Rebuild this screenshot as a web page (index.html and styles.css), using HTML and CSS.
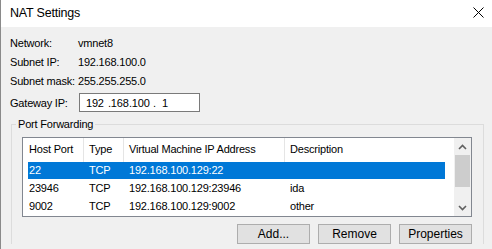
FILE: index.html
```html
<!DOCTYPE html>
<html lang="en">
<head>
  <meta charset="UTF-8" />
  <title>NAT Settings</title>
  <link rel="stylesheet" href="styles.css">
</head>
<body>
  <div class="window">
    <div class="titlebar">
      <span class="title">NAT Settings</span>
      <svg class="close" width="11" height="11" viewBox="0 0 11 11" aria-label="Close">
        <path d="M0.5 0.5 L10.5 10.5 M10.5 0.5 L0.5 10.5" stroke="#000" stroke-width="1" fill="none" />
      </svg>
    </div>

    <div class="content">
      <div class="info">
        <span class="label">Network:</span><span class="value">vmnet8</span>
        <span class="label">Subnet IP:</span><span class="value">192.168.100.0</span>
        <span class="label">Subnet mask:</span><span class="value">255.255.255.0</span>
      </div>

      <div class="gateway">
        <span class="label">Gateway IP:</span>
        <div class="ip-box">
          <span class="ip-part p1">192</span><span class="ip-part p2">.168</span><span class="ip-part p3">.100</span><span class="ip-part p4">.</span><span class="ip-part p5">1</span>
        </div>
      </div>

      <fieldset class="group">
        <legend>Port Forwarding</legend>

        <div class="listview">
          <div class="list-body">
            <div class="list-head">
              <div class="hcell">Host Port</div>
              <div class="hcell">Type</div>
              <div class="hcell">Virtual Machine IP Address</div>
              <div class="hcell last">Description</div>
            </div>
            <div class="list-row selected">
              <div class="cell first">22</div>
              <div class="cell">TCP</div>
              <div class="cell">192.168.100.129:22</div>
              <div class="cell"></div>
            </div>
            <div class="list-row">
              <div class="cell first">23946</div>
              <div class="cell">TCP</div>
              <div class="cell">192.168.100.129:23946</div>
              <div class="cell">ida</div>
            </div>
            <div class="list-row">
              <div class="cell first">9002</div>
              <div class="cell">TCP</div>
              <div class="cell">192.168.100.129:9002</div>
              <div class="cell">other</div>
            </div>
          </div>

          <div class="scrollbar">
            <div class="sb-btn">
              <svg width="9" height="6" viewBox="0 0 9 6"><path d="M1 5 L4.5 1.5 L8 5" stroke="#606060" stroke-width="1.6" fill="none" /></svg>
            </div>
            <div class="sb-track"><div class="sb-thumb"></div></div>
            <div class="sb-btn">
              <svg width="9" height="6" viewBox="0 0 9 6"><path d="M1 1 L4.5 4.5 L8 1" stroke="#606060" stroke-width="1.6" fill="none" /></svg>
            </div>
          </div>
        </div>

        <div class="buttons">
          <button>Add...</button>
          <button>Remove</button>
          <button>Properties</button>
        </div>
      </fieldset>
    </div>
  </div>
</body>
</html>
```

FILE: styles.css
```css
/* base */
* {
  margin: 0; padding: 0; box-sizing: border-box;
}
body {
  background: #f0f0f0;
  font-family: 'Liberation Sans', Arial, sans-serif;
  font-size: 11px;
  letter-spacing: -0.2px;
  color: #000;
  width: 492px;
  height: 249px;
  overflow: hidden;
}

.window {
  height: 249px;
  border-left: 1px solid #8a8a8a;
  background: #f0f0f0;
}

/* title bar */
.titlebar {
  height: 27px;
  background: #fff;
  display: flex;
  align-items: center;
  justify-content: space-between;
  padding: 0 8px 2px 9px;
}
.title {
  font-size: 12.5px;
}
.close {
  display: block;
}

/* info rows */
.content {
  padding-top: 7px;
}
.info {
  display: grid;
  grid-template-columns: 68px auto;
  grid-auto-rows: 18px;
  row-gap: 1px;
  align-items: center;
  padding-left: 9px;
  white-space: nowrap;
}

.gateway {
  display: flex;
  align-items: center;
  margin-top: 3px;
  padding-left: 9px;
}
.gateway .label {
  width: 69px;
}
.ip-box {
  width: 121px;
  height: 19px;
  border: 1px solid #7a7a7a;
  background: #fff;
  display: flex;
  align-items: center;
  padding-left: 6px;
  white-space: pre;
}
.ip-part { display: inline-block; flex: none; }
.p1 { width: 22px; }
.p2 { width: 21px; }
.p3 { width: 24px; }
.p4 { width: 9px; }

/* group box */
.group {
  margin: 5px 8px 0 10px;
  border: 1px solid #dcdcdc;
  border-bottom: none;
  padding: 6px 11px 0 10px;
}
.group legend {
  margin-left: -6px;
  padding: 0 2px;
  line-height: 14px;
}

.listview {
  width: 450px;
  height: 80px;
  border: 1px solid #828790;
  background: #fff;
  display: flex;
}
.list-body {
  flex: 1;
}
.list-head {
  display: grid;
  grid-template-columns: 61px 40px 161px 1fr;
  height: 24px;
}
.hcell {
  border-right: 1px solid #e5e5e5;
  padding-left: 6px;
  line-height: 23px;
}
.hcell:nth-child(n+2) { padding-left: 5px; }
.hcell.last { border-right: none; }

.list-row {
  display: grid;
  grid-template-columns: 56px 40px 161px 1fr;
  height: 18px;
  line-height: 17px;
  margin: 0 9px 0 5px;
}
.list-row.selected {
  background: linear-gradient(#0078d7 17px, transparent 17px);
  color: #fff;
}
.cell {
  padding-left: 5px;
  white-space: nowrap;
}
.cell.first { padding-left: 1px; }

/* scrollbar */
.scrollbar {
  width: 17px;
  background: #f0f0f0;
  display: flex;
  flex-direction: column;
}
.sb-btn {
  height: 17px;
  display: flex;
  align-items: center;
  justify-content: center;
}
.sb-track {
  flex: 1;
}
.sb-thumb {
  height: 32px;
  margin: 0 1px;
  background: #cdcdcd;
}

/* buttons */
.buttons {
  display: flex;
  justify-content: flex-end;
  gap: 8px;
  margin-top: 7px;
}
button {
  width: 73px;
  height: 20px;
  border: 1px solid #adadad;
  background: #e1e1e1;
  font-family: inherit;
  font-size: 12px;
  letter-spacing: 0;
  color: #000;
}
```
